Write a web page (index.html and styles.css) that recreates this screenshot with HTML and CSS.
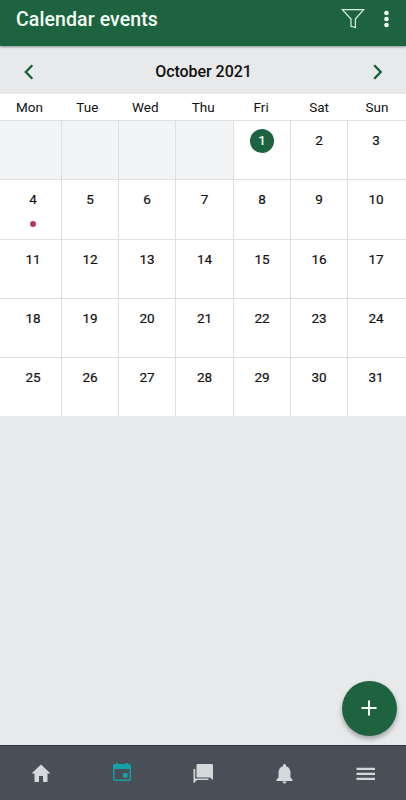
FILE: index.html
```html
<!DOCTYPE html>
<html lang="en">
<head>
<meta charset="utf-8">
<title>Calendar events</title>
<link rel="stylesheet" href="styles.css">
</head>
<body>
<div class="app">
  <header class="topbar">
    <h1>Calendar events</h1>
    <svg class="filter" width="24" height="22" viewBox="0 0 24 22"><path d="M1.3 1.6H22.7L14.4 11V19.5L10 18.3V11Z"/></svg>
    <svg class="more" width="6" height="18" viewBox="0 0 6 18"><circle cx="2.500" cy="3" r="2.3"/><circle cx="2.500" cy="9" r="2.3"/><circle cx="2.500" cy="15" r="2.3"/></svg>
  </header>
  <main>
    <div class="month">
      <svg width="10" height="16" viewBox="0 0 10 16"><path d="M8.3 1.3L1.8 8L8.3 14.7"/></svg>
      <h2>October 2021</h2>
      <svg width="10" height="16" viewBox="0 0 10 16"><path d="M1.2 1.3L7.7 8L1.2 14.7"/></svg>
    </div>
    <div class="weekdays"><span>Mon</span><span>Tue</span><span>Wed</span><span>Thu</span><span>Fri</span><span>Sat</span><span>Sun</span></div>
    <div class="days">
      <div class="empty"></div><div class="empty"></div><div class="empty"></div><div class="empty"></div><div><b class="today">1</b></div><div><b>2</b></div><div><b>3</b></div>
      <div><b>4</b><i class="dot"></i></div><div><b>5</b></div><div><b>6</b></div><div><b>7</b></div><div><b>8</b></div><div><b>9</b></div><div><b>10</b></div>
      <div><b>11</b></div><div><b>12</b></div><div><b>13</b></div><div><b>14</b></div><div><b>15</b></div><div><b>16</b></div><div><b>17</b></div>
      <div><b>18</b></div><div><b>19</b></div><div><b>20</b></div><div><b>21</b></div><div><b>22</b></div><div><b>23</b></div><div><b>24</b></div>
      <div><b>25</b></div><div><b>26</b></div><div><b>27</b></div><div><b>28</b></div><div><b>29</b></div><div><b>30</b></div><div><b>31</b></div>
    </div>
    <button class="fab" aria-label="Add event"><svg width="17" height="17" viewBox="0 0 17 17"><path d="M8 .5V15.5M.5 8H15.5"/></svg></button>
  </main>
  <nav class="tabs">
    <a><svg width="24" height="24" viewBox="0 0 24 24"><path d="M10 21v-6h4v6h4.500v-8.500h3L12 3.500 2.500 12.500h3V21z"/></svg></a>
    <a class="active"><svg width="24" height="24" viewBox="0 0 24 24"><path d="M17.500 12h-4.500v4.500h4.500v-4.500zM16 2v1H8V2H6v1H5c-1.110 0-2 .9-2 2v13c0 1.100.89 2 2 2h14c1.100 0 2-.9 2-2V5c0-1.100-.9-2-2-2h-1V2h-2zm3.500 16.500H4.500V8h15v10.500z"/></svg></a>
    <a><svg width="24" height="24" viewBox="0 0 24 24"><path d="M6.500 3H21q1 0 1 1V19L19 16.400H6.500q-1 0-1-1V4q0-1 1-1ZM2.500 8H4.200V17.600H17.500V19H6L2.500 22.500Z"/></svg></a>
    <a><svg width="24" height="24" viewBox="0 0 24 24"><path d="M12.500 22.500c1.100 0 2-.9 2-2h-4c0 1.100.9 2 2 2zm6-6v-5c0-3.070-1.640-5.640-4.500-6.320V4.500c0-.83-.67-1.500-1.500-1.500s-1.500.67-1.500 1.500v.68C8.130 5.860 6.500 8.420 6.500 11.500v5l-2 2v1.500h16v-1.500l-2-2z"/></svg></a>
    <a><svg width="24" height="24" viewBox="0 0 24 24"><path d="M3.500 19h18.500v-2.200H3.500zm0-5h18.500v-2.200H3.500zm0-7.200v2.200h18.500V6.800z"/></svg></a>
  </nav>
</div>
</body>
</html>
```
FILE: styles.css
```css
* { box-sizing: border-box; }
body { margin: 0; font-family: Roboto, "Liberation Sans", sans-serif; color: #111; }
.app { height: 800px; display: flex; flex-direction: column; background: #e7e9ea; }
.topbar { height: 46px; flex: none; background: #1e633f; display: flex; align-items: flex-start; padding: 0 16px; box-shadow: 0 1px 2px rgba(0,0,0,.4); z-index: 1; }
h1 { margin: 8px auto 0 0; font-size: 19.5px; line-height: 24px; font-weight: 500; letter-spacing: .1px; color: #f4fff8; }
.filter { margin: 8px 19px 0 0; fill: none; stroke: #d9f5e3; stroke-width: 1.2; }
.more { margin-top: 10px; fill: #f4fff8; }
main { flex: 1; position: relative; }
.month { height: 48px; display: flex; align-items: center; justify-content: space-between; padding: 4px 23px 0 24px; }
.month svg { fill: none; stroke: #116034; stroke-width: 2.3; }
h2 { margin: 0; font-size: 16px; line-height: 20px; font-weight: 500; letter-spacing: -.05px; }
.weekdays { height: 26px; display: grid; grid-template-columns: repeat(7, 1fr); padding-left: .5px; background: #fff; text-align: center; font-size: 13.5px; line-height: 26px; letter-spacing: .05px; }
.days { display: grid; grid-template-columns: 62px 57px 57px 58px 57px 57px 58px; grid-template-rows: 60px 60px 59px 59px 58px; background: #fff; }
.days div { border-top: 1px solid #dedfe0; border-right: 1px solid #dedfe0; padding-top: 8px; display: flex; flex-direction: column; align-items: center; }
.days div:nth-child(7n) { border-right: 0; padding-right: 2px; }
.days div:nth-child(7n+1) { padding-left: 5px; }
.days div:nth-child(n+8) { margin-top: -1px; }
.days .empty { background: #f3f4f6; }
.days b { width: 24px; height: 24px; border-radius: 50%; text-align: center; font-size: 13.5px; line-height: 23px; font-weight: 400; -webkit-text-stroke: .2px currentColor; }
.days .today { background: #1e633f; color: #fff; }
.dot { width: 6px; height: 6px; margin-top: 9px; border-radius: 50%; background: #bd3352; }
.fab { position: absolute; right: 9px; bottom: 9px; width: 55px; height: 55px; padding: 0; border: 0; border-radius: 50%; background: #1e633f; display: grid; place-items: center; box-shadow: 0 3px 5px rgba(0,0,0,.3); }
.fab path { stroke: #f4fff8; stroke-width: 2; }
.tabs { height: 55px; flex: none; display: grid; grid-template-columns: repeat(5, 1fr); align-items: center; justify-items: center; background: #484f57; border-top: 1px solid #303940; }
.tabs svg { display: block; fill: #d5d8da; }
.tabs .active svg { fill: #15a0a6; }
```
